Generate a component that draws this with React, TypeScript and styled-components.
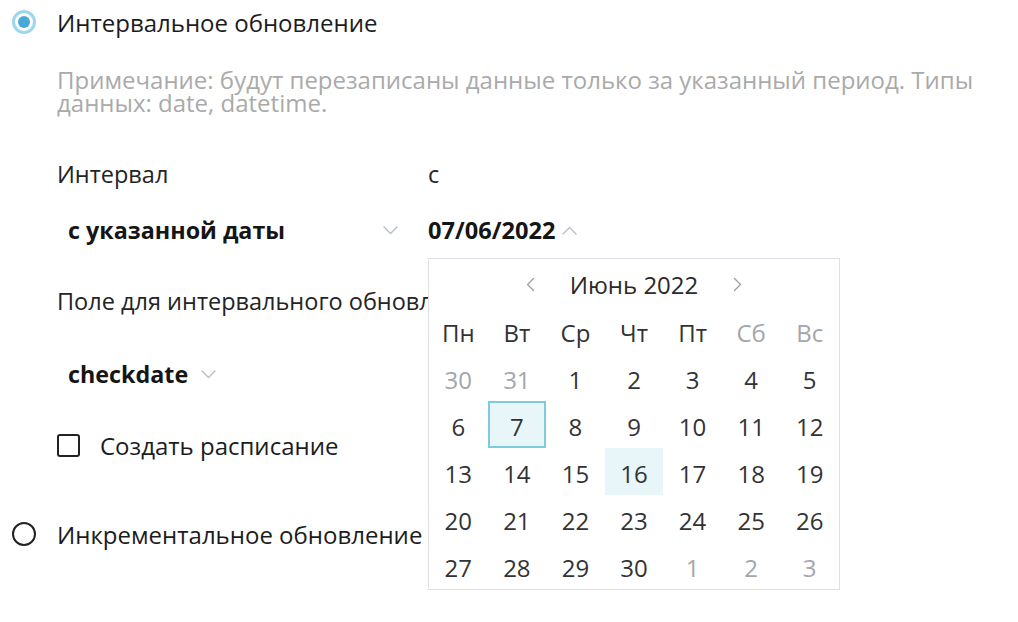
import React from "react";
import styled, { createGlobalStyle } from "styled-components";

const Global = createGlobalStyle`
  html, body { margin: 0; padding: 0; background: #fff; }
  body { font-family: "Open Sans", "Noto Sans", sans-serif; color: #222; }
`;

const Page = styled.div`
  padding: 6px 0 0 0;
  min-height: 622px;
  box-sizing: border-box;
  position: relative;
`;

const RadioRow = styled.label<{ $mt?: number }>`
  display: flex;
  align-items: center;
  height: 32px;
  margin-top: ${(p) => p.$mt ?? 0}px;
  font-size: 24px;
  color: #1c1c1c;
  white-space: nowrap;
`;

const RadioSlot = styled.span`
  width: 57px;
  display: flex;
  justify-content: flex-start;
  padding-left: 12px;
  box-sizing: border-box;
`;

const RadioCircle = styled.span<{ $checked?: boolean }>`
  width: 24px;
  height: 24px;
  box-sizing: border-box;
  border-radius: 50%;
  border: ${(p) => (p.$checked ? "3px solid #9fd6ee" : "2px solid #222")};
  display: flex;
  align-items: center;
  justify-content: center;
  &::after {
    content: "";
    display: ${(p) => (p.$checked ? "block" : "none")};
    width: 12px;
    height: 12px;
    border-radius: 50%;
    background: #47a9d8;
  }
`;

const Body = styled.div`
  padding-left: 57px;
`;

const Note = styled.div`
  margin-top: 30px;
  font-size: 24px;
  line-height: 23px;
  color: #aaaaaa;
  width: 945px;
`;

const Grid = styled.div`
  display: grid;
  grid-template-columns: 371px 1fr;
  margin-top: 45px;
  row-gap: 21px;
`;

const Label = styled.div<{ $mt?: number }>`
  font-size: 23.5px;
  line-height: 30px;
  height: 30px;
  color: #242424;
  margin-top: ${(p) => p.$mt ?? 0}px;
  white-space: nowrap;
`;

const Select = styled.div<{ $w?: number; $mt?: number }>`
  display: flex;
  align-items: center;
  height: 40px;
  padding-left: 11px;
  box-sizing: border-box;
  width: ${(p) => (p.$w ? `${p.$w}px` : "auto")};
  margin-top: ${(p) => p.$mt ?? 0}px;
  font-size: 23.3px;
  font-weight: 700;
  color: #151515;
  gap: 13px;
`;

const SelectText = styled.span`
  flex: 0 0 auto;
`;

const Spacer = styled.span`
  flex: 1;
`;

const DateWrap = styled.div`
  position: relative;
  display: flex;
  align-items: center;
  height: 40px;
  font-size: 23.6px;
  font-weight: 700;
  color: #151515;
  gap: 7px;
`;

const Chevron = ({ up, color = "#b7bec8", w = 15 }: { up?: boolean; color?: string; w?: number }) => (
  <svg width={w} height={9} viewBox="0 0 15 9" fill="none">
    <path
      d={up ? "M1 8 L7.5 1.5 L14 8" : "M1 1 L7.5 7.5 L14 1"}
      stroke={color}
      strokeWidth={1.4}
      strokeLinecap="round"
      strokeLinejoin="round"
    />
  </svg>
);

const Popup = styled.div`
  position: absolute;
  top: 48px;
  left: 0;
  width: 412px;
  height: 332px;
  box-sizing: border-box;
  border: 1px solid #dde1e7;
  background: #fff;
  font-weight: 400;
  z-index: 5;
  display: grid;
  grid-template-rows: 48px 1fr;
`;

const CalHeader = styled.div`
  display: flex;
  align-items: center;
  justify-content: center;
  font-size: 24px;
  color: #2a2a2a;
  padding-top: 2px;
`;

const Arrow = styled.span`
  display: flex;
  align-items: center;
  justify-content: center;
  width: 40px;
`;

const MonthTitle = styled.span`
  padding: 0 19px;
`;

const CalGrid = styled.div`
  display: grid;
  grid-template-columns: repeat(7, 1fr);
  grid-template-rows: repeat(6, 1fr);
`;

const Cell = styled.div<{ $muted?: boolean; $selected?: boolean; $today?: boolean }>`
  display: flex;
  align-items: center;
  justify-content: center;
  font-size: 24px;
  padding-top: 3px;
  color: ${(p) => (p.$muted ? "#a3a6ab" : "#333")};
  background: ${(p) => (p.$selected || p.$today ? "#e8f5f9" : "transparent")};
  box-shadow: ${(p) => (p.$selected ? "inset 0 0 0 2px #7ccbe1" : "none")};
`;

const WeekDay = styled(Cell)``;

const CheckRow = styled.label`
  display: flex;
  align-items: center;
  height: 30px;
  margin-top: 36px;
  gap: 20px;
  font-size: 24px;
  color: #1c1c1c;
`;

const CheckBox = styled.span`
  width: 23px;
  height: 23px;
  box-sizing: border-box;
  border: 2px solid #222;
  border-radius: 3px;
`;

const weekDays = ["Пн", "Вт", "Ср", "Чт", "Пт", "Сб", "Вс"];

type Day = { n: number; muted?: boolean; selected?: boolean; today?: boolean };
const days: Day[] = [
  { n: 30, muted: true },
  { n: 31, muted: true },
  ...Array.from({ length: 30 }, (_, i) => ({
    n: i + 1,
    selected: i + 1 === 7,
    today: i + 1 === 16,
  })),
  { n: 1, muted: true },
  { n: 2, muted: true },
  { n: 3, muted: true },
];

export default function App() {
  return (
    <Page>
      <Global />
      <RadioRow>
        <RadioSlot>
          <RadioCircle $checked />
        </RadioSlot>
        Интервальное обновление
      </RadioRow>
      <Body>
        <Note>
          Примечание: будут перезаписаны данные только за указанный период. Типы данных: date, datetime.
        </Note>
        <Grid>
          <Label>Интервал</Label>
          <Label>с</Label>
          <Select $w={341}>
            <SelectText>с указанной даты</SelectText>
            <Spacer />
            <Chevron />
          </Select>
          <DateWrap>
            <span>07/06/2022</span>
            <Chevron up color="#b7bec8" />
            <Popup>
              <CalHeader>
                <Arrow>
                  <svg width="9" height="15" viewBox="0 0 9 15" fill="none">
                    <path d="M7.5 1.5 L1.5 7.5 L7.5 13.5" stroke="#9aa0a8" strokeWidth="1.3" strokeLinecap="round" strokeLinejoin="round" />
                  </svg>
                </Arrow>
                <MonthTitle>Июнь 2022</MonthTitle>
                <Arrow>
                  <svg width="9" height="15" viewBox="0 0 9 15" fill="none">
                    <path d="M1.5 1.5 L7.5 7.5 L1.5 13.5" stroke="#9aa0a8" strokeWidth="1.3" strokeLinecap="round" strokeLinejoin="round" />
                  </svg>
                </Arrow>
              </CalHeader>
              <CalGrid>
                {weekDays.map((d, i) => (
                  <WeekDay key={d} $muted={i >= 5}>
                    {d}
                  </WeekDay>
                ))}
                {days.map((d, i) => (
                  <Cell key={i} $muted={d.muted} $selected={d.selected} $today={d.today}>
                    {d.n}
                  </Cell>
                ))}
              </CalGrid>
            </Popup>
          </DateWrap>
        </Grid>
        <Label $mt={36}>Поле для интервального обновления</Label>
        <Select $mt={38}>
          <SelectText>checkdate</SelectText>
          <Chevron />
        </Select>
        <CheckRow>
          <CheckBox />
          Создать расписание
        </CheckRow>
      </Body>
      <RadioRow $mt={58}>
        <RadioSlot>
          <RadioCircle />
        </RadioSlot>
        Инкрементальное обновление
      </RadioRow>
    </Page>
  );
}
